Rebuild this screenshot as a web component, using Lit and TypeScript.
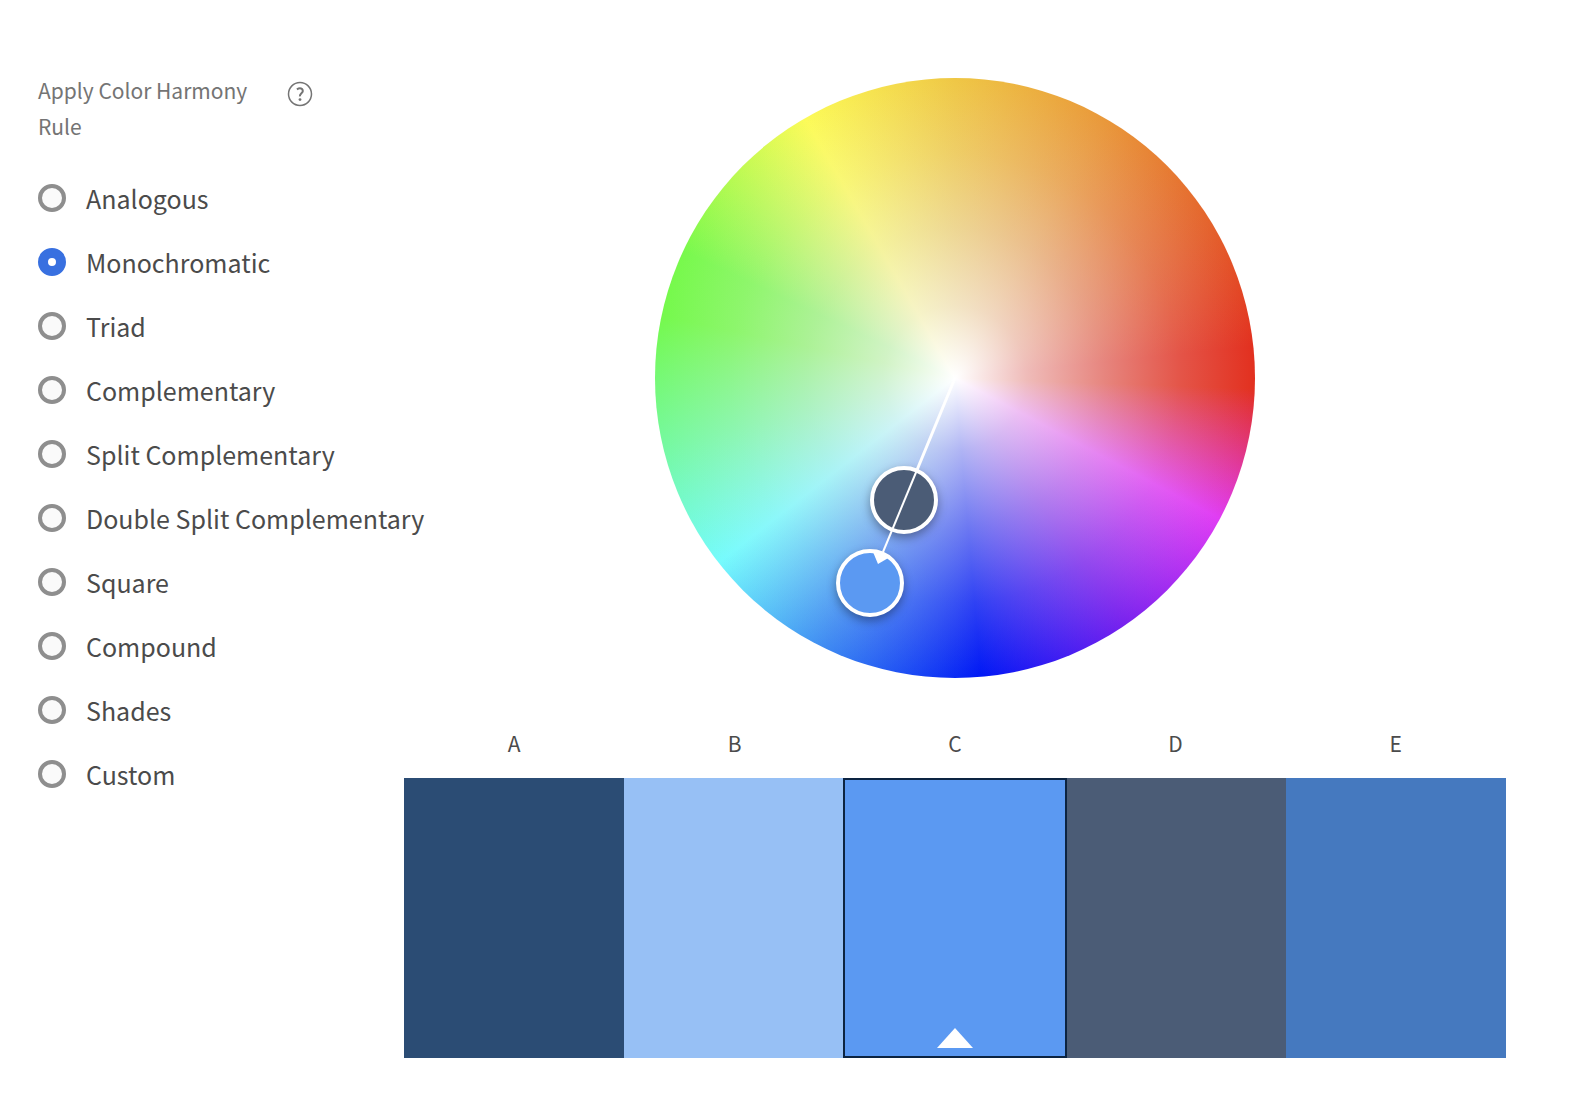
import { LitElement, html, css, svg } from "lit";
import { customElement, property, state } from "lit/decorators.js";
import { classMap } from "lit/directives/class-map.js";
import { styleMap } from "lit/directives/style-map.js";

interface Swatch {
  name: string;
  color: string;
}

interface Handle {
  name: string;
  color: string;
  x: number;
  y: number;
}

const RULES = [
  "Analogous",
  "Monochromatic",
  "Triad",
  "Complementary",
  "Split Complementary",
  "Double Split Complementary",
  "Square",
  "Compound",
  "Shades",
  "Custom",
];

const SWATCHES: Swatch[] = [
  { name: "A", color: "#2b4c74" },
  { name: "B", color: "#97c0f5" },
  { name: "C", color: "#5b99f2" },
  { name: "D", color: "#4b5c76" },
  { name: "E", color: "#4579bf" },
];

/* Handle centres on a 600-unit wheel. */
const HANDLES: Handle[] = [
  { name: "D", color: "#4b5c76", x: 249, y: 422 },
  { name: "C", color: "#5b99f2", x: 215, y: 505 },
];

@customElement("harmony-rules")
export class HarmonyRules extends LitElement {
  @state() private selected = "Monochromatic";

  static styles = css`
    :host {
      display: block;
    }
    .head {
      display: flex;
      align-items: flex-start;
      margin-bottom: 22px;
    }
    .title {
      width: 249px;
      margin: 0;
      font-size: 21px;
      font-weight: 400;
      line-height: 36px;
      color: #747474;
    }
    .help {
      display: block;
      margin-top: 9px;
      padding: 0;
      border: 0;
      background: none;
    }
    .help svg {
      display: block;
    }
    .rules {
      margin: 0;
      padding: 0;
      border: 0;
    }
    .rule {
      display: flex;
      align-items: center;
      height: 64px;
      gap: 20px;
      font-size: 25px;
      line-height: 40px;
      color: #4b4b4b;
      white-space: nowrap;
    }
    .radio {
      appearance: none;
      box-sizing: border-box;
      flex: none;
      width: 28px;
      height: 28px;
      margin: 0;
      border: 4px solid #8e8e8e;
      border-radius: 50%;
      background: #fafafa;
    }
    .radio:checked {
      border: 10px solid #3870e0;
      background: #fff;
    }
  `;

  render() {
    return html`
      <div class="head">
        <h2 class="title" id="title">Apply Color Harmony Rule</h2>
        <button class="help" aria-label="Help">
          <svg width="26" height="26" viewBox="0 0 26 26" fill="none" stroke="#747474">
            <circle cx="13" cy="13" r="11.5" stroke-width="1.5" />
            <path d="M9.9 8.3Q13 6.3 15 8Q16.9 10.2 14.4 12.2Q12.7 13.7 12.9 15.4" stroke-width="2" />
            <circle cx="13" cy="18.6" r="1.4" fill="#747474" stroke="none" />
          </svg>
        </button>
      </div>
      <fieldset class="rules" aria-labelledby="title">
        ${RULES.map(
          (rule) => html`
            <label class="rule">
              <input
                class="radio"
                type="radio"
                name="rule"
                .value=${rule}
                .checked=${rule === this.selected}
                @change=${() => (this.selected = rule)}
              />
              <span>${rule}</span>
            </label>
          `
        )}
      </fieldset>
    `;
  }
}

@customElement("color-wheel")
export class ColorWheel extends LitElement {
  static styles = css`
    :host {
      display: block;
    }
    .wheel {
      position: relative;
      aspect-ratio: 1;
      border-radius: 50%;
      background: radial-gradient(
          closest-side,
          #fff,
          rgba(244, 241, 244, 0.72) 24%,
          rgba(236, 233, 238, 0.46) 50%,
          rgba(236, 233, 238, 0.2) 75%,
          rgba(236, 233, 238, 0)
        ),
        conic-gradient(
          #efc745 0deg,
          #e9983a 30deg,
          #e4602b 60deg,
          #e2301f 84deg,
          #e2301f 92deg,
          #e03cf4 118deg,
          #7a22ee 145deg,
          #0018f5 175deg,
          #3f8bf2 206deg,
          #75fbfd 232deg,
          #75f9a0 257deg,
          #75f94c 282deg,
          #78f94c 295deg,
          #fcfb58 330deg,
          #efc745 360deg
        );
    }
    .handle {
      position: absolute;
      box-sizing: border-box;
      width: 68px;
      height: 68px;
      padding: 0;
      border: 4px solid #fff;
      border-radius: 50%;
      box-shadow: 0 4px 10px rgba(0, 0, 0, 0.35);
      transform: translate(-50%, -50%);
    }
    .arm {
      position: absolute;
      inset: 0;
      width: 100%;
      height: 100%;
      pointer-events: none;
    }
  `;

  render() {
    return html`
      <div class="wheel">
        ${HANDLES.map(
          (h) => html`
            <button
              class="handle"
              aria-label="Color ${h.name}"
              style=${styleMap({
                background: h.color,
                left: `${(h.x / 600) * 100}%`,
                top: `${(h.y / 600) * 100}%`,
              })}
            ></button>
          `
        )}
        <svg class="arm" viewBox="0 0 600 600">
          ${svg`
            <path d="M300 300L262 392" stroke="#fff" stroke-width="3" />
            <path d="M262 392L228 474" stroke="#fff" stroke-width="2" />
            <path d="M218 474L235 479L223 486Z" fill="#fff" />
          `}
        </svg>
      </div>
    `;
  }
}

@customElement("swatch-strip")
export class SwatchStrip extends LitElement {
  @property() active = "C";

  static styles = css`
    :host {
      display: block;
    }
    .strip {
      display: grid;
      grid-template-columns: repeat(5, 1fr);
    }
    .name {
      padding: 47px 0 17px;
      font-size: 21px;
      line-height: 36px;
      text-align: center;
      color: #4b4b4b;
    }
    .swatch {
      display: flex;
      align-items: flex-end;
      justify-content: center;
      width: 100%;
      height: 280px;
      padding: 0 0 10px;
      border: 0;
    }
    .swatch.active {
      position: relative;
      outline: 2px solid #0c2442;
      outline-offset: -2px;
      box-sizing: border-box;
      width: calc(100% + 4px);
      margin: 0 -2px;
    }
    .marker {
      display: block;
    }
  `;

  render() {
    return html`
      <div class="strip">
        ${SWATCHES.map((s) => html`<div class="name">${s.name}</div>`)}
        ${SWATCHES.map(
          (s) => html`
            <button
              class=${classMap({ swatch: true, active: s.name === this.active })}
              style=${styleMap({ background: s.color })}
              aria-label="Color ${s.name}"
              @click=${() => (this.active = s.name)}
            >
              ${s.name === this.active
                ? html`<svg class="marker" width="36" height="20" viewBox="0 0 36 20">
                    <path d="M18 0L36 20H0Z" fill="#fff" />
                  </svg>`
                : ""}
            </button>
          `
        )}
      </div>
    `;
  }
}

@customElement("app-root")
export class AppRoot extends LitElement {
  static styles = css`
    :host {
      display: block;
      min-height: 100vh;
      background: #fff;
      font-family: "Noto Sans CJK JP", "Open Sans", sans-serif;
    }
    .page {
      display: flex;
      align-items: flex-start;
      padding: 78px 66px 42px 38px;
    }
    .side {
      flex: none;
      width: 366px;
      margin-top: -6px;
    }
    .main {
      flex: 1;
      min-width: 0;
    }
    .wheel {
      max-width: 600px;
      margin: 0 auto;
    }
  `;

  render() {
    return html`
      <div class="page">
        <harmony-rules class="side"></harmony-rules>
        <main class="main">
          <color-wheel class="wheel"></color-wheel>
          <swatch-strip></swatch-strip>
        </main>
      </div>
    `;
  }
}
